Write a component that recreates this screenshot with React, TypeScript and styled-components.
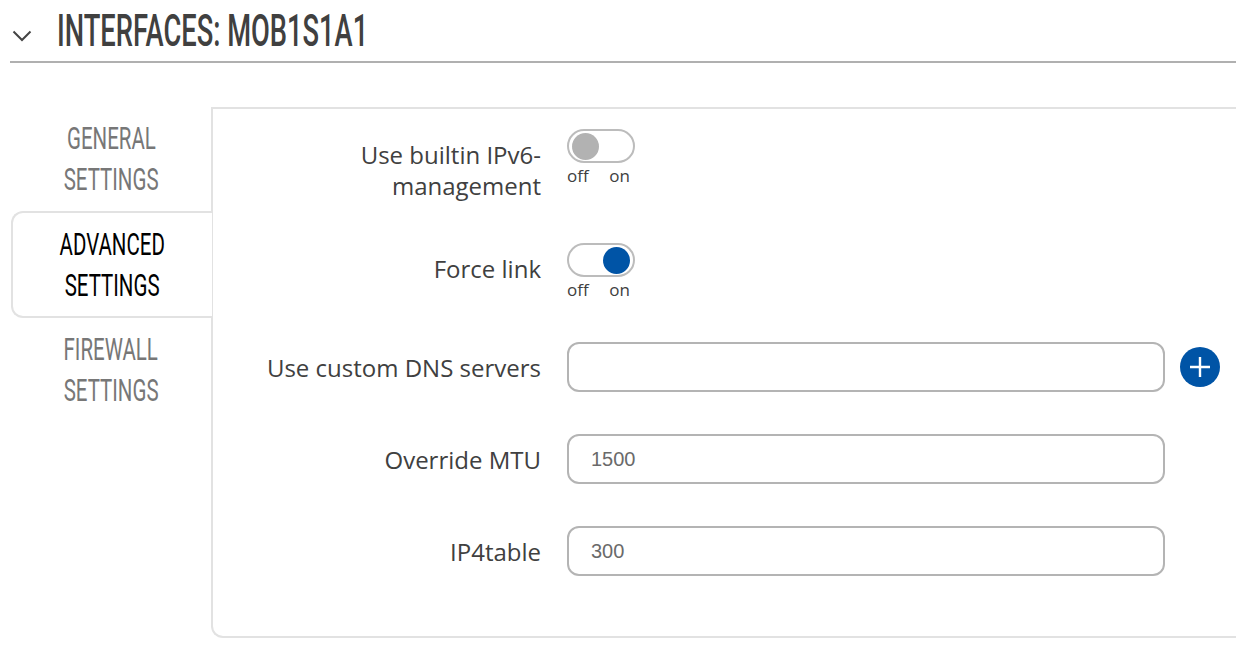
import * as React from "react"
import styled, { createGlobalStyle } from "styled-components"

const GlobalStyle = createGlobalStyle`
  html, body {
    margin: 0;
    padding: 0;
    background: #fff;
  }
  body {
    font-family: "Open Sans", "Liberation Sans", sans-serif;
    color: #404040;
  }
`

const Page = styled.div`
  width: 1236px;
  padding-left: 10px;
  box-sizing: border-box;
`

const Header = styled.div`
  height: 61px;
  display: flex;
  align-items: center;
  border-bottom: 2px solid #b0b0b0;
  box-sizing: content-box;
`

const Chevron = styled.svg`
  width: 20px;
  height: 12px;
  margin-left: 2px;
  margin-top: 10px;
  flex: none;
`

const Title = styled.h1`
  margin: 0 0 0 25px;
  font-family: Roboto, "DejaVu Sans Condensed", sans-serif;
  font-weight: 500;
  font-size: 44px;
  line-height: 1;
  color: #404040;
  transform: scaleX(0.62);
  transform-origin: left center;
  white-space: nowrap;
`

const Body = styled.div`
  display: flex;
  margin-top: 44px;
`

const TabList = styled.div`
  width: 201px;
  flex: none;
  display: flex;
  flex-direction: column;
`

const Tab = styled.div<{ $active?: boolean }>`
  position: relative;
  z-index: 1;
  height: ${p => (p.$active ? "107px" : "104px")};
  box-sizing: border-box;
  display: flex;
  flex-direction: column;
  align-items: center;
  justify-content: center;
  margin-left: 1px;
  margin-right: ${p => (p.$active ? "-1px" : "0")};
  background: #fff;
  border: ${p => (p.$active ? "2px solid #e2e2e2" : "none")};
  border-right: none;
  border-radius: 12px 0 0 12px;
`

const TabLine = styled.span<{ $active?: boolean }>`
  display: block;
  font-family: Roboto, "DejaVu Sans Condensed", sans-serif;
  font-weight: 400;
  font-size: 32px;
  line-height: 41px;
  color: ${p => (p.$active ? "#000" : "#777")};
  transform: scaleX(0.64);
  white-space: nowrap;
`

const Panel = styled.div`
  flex: 1;
  border: 2px solid #e2e2e2;
  border-right: none;
  border-radius: 0 0 0 12px;
  padding: 20px 0 60px;
  display: flex;
  flex-direction: column;
  gap: 42px;
`

const Row = styled.div<{ $center?: boolean }>`
  display: flex;
  align-items: ${p => (p.$center ? "center" : "flex-start")};
  gap: 26px;
`

const Label = styled.div<{ $center?: boolean }>`
  width: 328px;
  flex: none;
  text-align: right;
  font-size: 24px;
  line-height: 31px;
  color: #404040;
  padding-top: ${p => (p.$center ? "0" : "10px")};
`

const SwitchBox = styled.div`
  width: 68px;
  display: flex;
  flex-direction: column;
`

const Track = styled.div<{ $on?: boolean }>`
  width: 68px;
  height: 34px;
  box-sizing: border-box;
  border: 2px solid #bcbcbc;
  border-radius: 17px;
  display: flex;
  align-items: center;
  justify-content: ${p => (p.$on ? "flex-end" : "flex-start")};
  padding: 0 3px;
`

const Knob = styled.div<{ $on?: boolean }>`
  width: 27px;
  height: 27px;
  border-radius: 50%;
  background: ${p => (p.$on ? "#0054a6" : "#b2b2b2")};
`

const SwitchText = styled.div`
  display: flex;
  justify-content: space-between;
  padding: 2px 5px 0 0;
  font-size: 17px;
  line-height: 21px;
  color: #404040;
`

const Input = styled.input`
  width: 598px;
  height: 50px;
  box-sizing: border-box;
  border: 2px solid #b4b4b4;
  border-radius: 12px;
  padding: 0 22px;
  font-family: "Liberation Sans", Arial, sans-serif;
  font-size: 20px;
  color: #555;
  outline: none;
  &::placeholder {
    color: #6a6a6a;
  }
`

const AddButton = styled.button`
  width: 40px;
  height: 40px;
  border-radius: 50%;
  border: none;
  padding: 0;
  margin-left: -11px;
  background: #0054a6;
  display: flex;
  align-items: center;
  justify-content: center;
`

const Switch = ({ on }: { on?: boolean }) => (
  <SwitchBox>
    <Track $on={on}>
      <Knob $on={on} />
    </Track>
    <SwitchText>
      <span>off</span>
      <span>on</span>
    </SwitchText>
  </SwitchBox>
)

const tabs = [
  { a: "GENERAL", b: "SETTINGS" },
  { a: "ADVANCED", b: "SETTINGS", active: true },
  { a: "FIREWALL", b: "SETTINGS" },
]

export default function App() {
  return (
    <Page>
      <GlobalStyle />
      <Header>
        <Chevron viewBox="0 0 20 12">
          <path d="M1.5 1.5 L10 10 L18.5 1.5" fill="none" stroke="#444" strokeWidth="2" />
        </Chevron>
        <Title>INTERFACES: MOB1S1A1</Title>
      </Header>
      <Body>
        <TabList>
          {tabs.map(t => (
            <Tab key={t.a} $active={t.active}>
              <TabLine $active={t.active}>{t.a}</TabLine>
              <TabLine $active={t.active}>{t.b}</TabLine>
            </Tab>
          ))}
        </TabList>
        <Panel>
          <Row>
            <Label>
              Use builtin IPv6-
              <br />
              management
            </Label>
            <Switch />
          </Row>
          <Row>
            <Label>Force link</Label>
            <Switch on />
          </Row>
          <Row $center>
            <Label $center>Use custom DNS servers</Label>
            <Input />
            <AddButton>
              <svg width="22" height="22" viewBox="0 0 22 22">
                <path d="M11 1 V21 M1 11 H21" stroke="#fff" strokeWidth="2.4" />
              </svg>
            </AddButton>
          </Row>
          <Row $center>
            <Label $center>Override MTU</Label>
            <Input placeholder="1500" />
          </Row>
          <Row $center>
            <Label $center>IP4table</Label>
            <Input placeholder="300" />
          </Row>
        </Panel>
      </Body>
    </Page>
  )
}
